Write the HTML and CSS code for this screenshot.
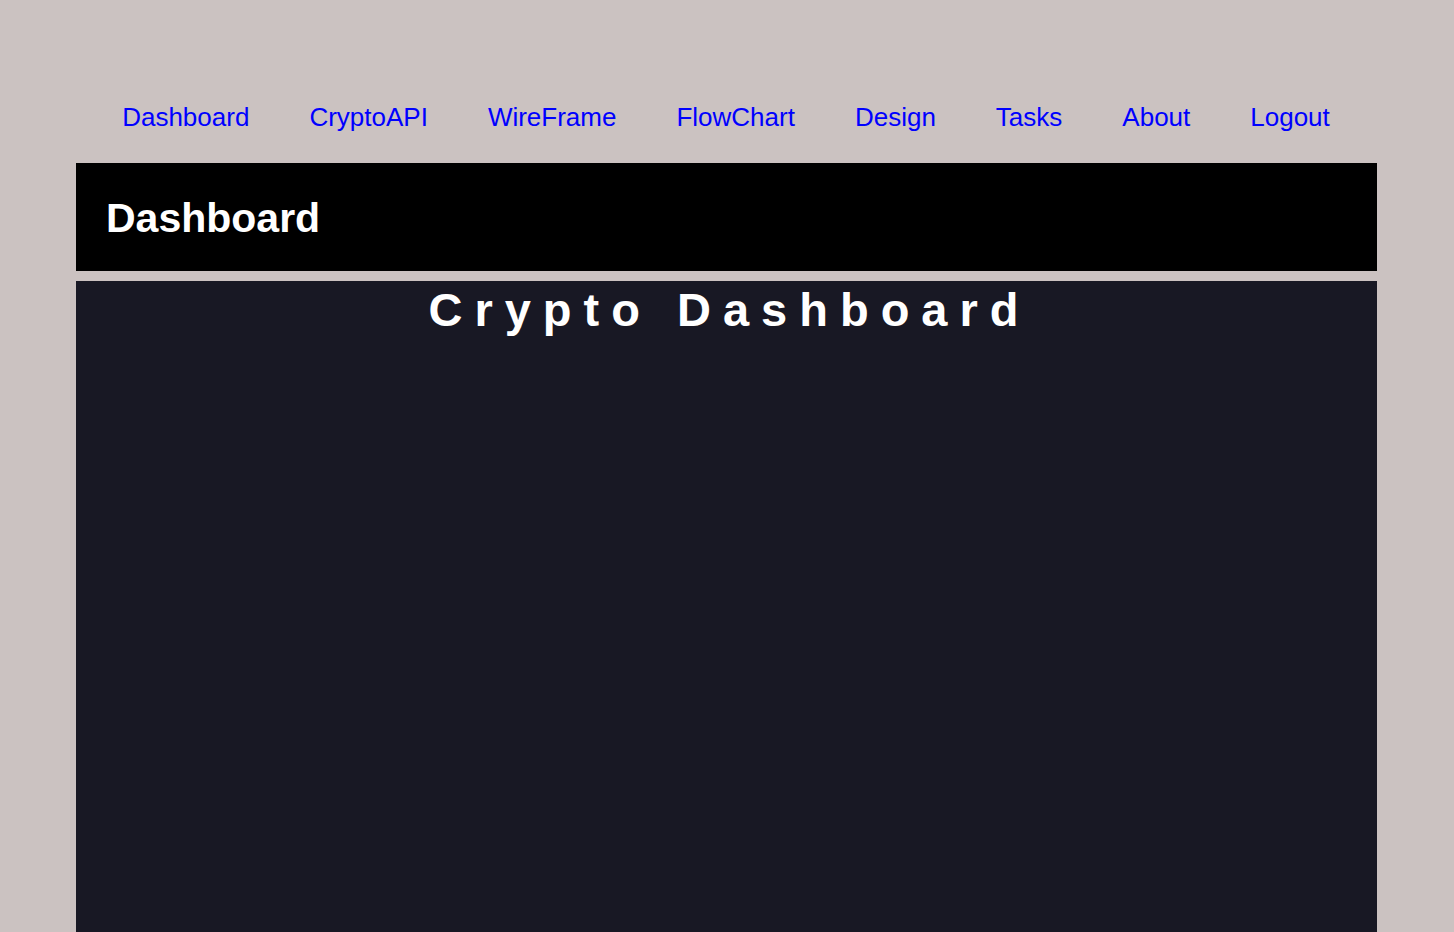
FILE: index.html
```html
<!DOCTYPE html>
<html lang="en">
<head>
<meta charset="utf-8">
<title>Dashboard</title>
<link rel="stylesheet" href="styles.css">
</head>
<body>
<nav class="topnav">
  <a href="#">Dashboard</a>
  <a href="#">CryptoAPI</a>
  <a href="#">WireFrame</a>
  <a href="#">FlowChart</a>
  <a href="#">Design</a>
  <a href="#">Tasks</a>
  <a href="#">About</a>
  <a href="#">Logout</a>
</nav>
<main class="page">
  <header class="page-header">
    <h1>Dashboard</h1>
  </header>
  <section class="panel">
    <h2 class="panel-title">Crypto Dashboard</h2>
  </section>
</main>
</body>
</html>
```
FILE: styles.css
```css
html, body {
  margin: 0;
  padding: 0;
}
body {
  background: #cbc2c1;
  font-family: "Liberation Sans", Arial, sans-serif;
}
.topnav {
  display: flex;
  justify-content: center;
  gap: 60px;
  padding: 102px 2px 31px 0;
}
.topnav a {
  color: #0000ff;
  font-size: 26px;
  text-decoration: none;
  line-height: 30px;
}
.page {
  display: flex;
  flex-direction: column;
  gap: 10px;
  margin: 0 77px 0 76px;
}
.page-header {
  background: #000;
  height: 108px;
  box-sizing: border-box;
  display: flex;
  align-items: center;
  padding: 2px 0 0 30px;
}
.page-header h1 {
  margin: 0;
  color: #fff;
  font-size: 41px;
  font-weight: bold;
}
.panel {
  background: #181824;
  min-height: 700px;
}
.panel-title {
  margin: 0;
  color: #fff;
  text-align: center;
  font-size: 47px;
  font-weight: bold;
  letter-spacing: 12px;
  line-height: 56px;
  padding: 1px 0 0 6px;
}
```
